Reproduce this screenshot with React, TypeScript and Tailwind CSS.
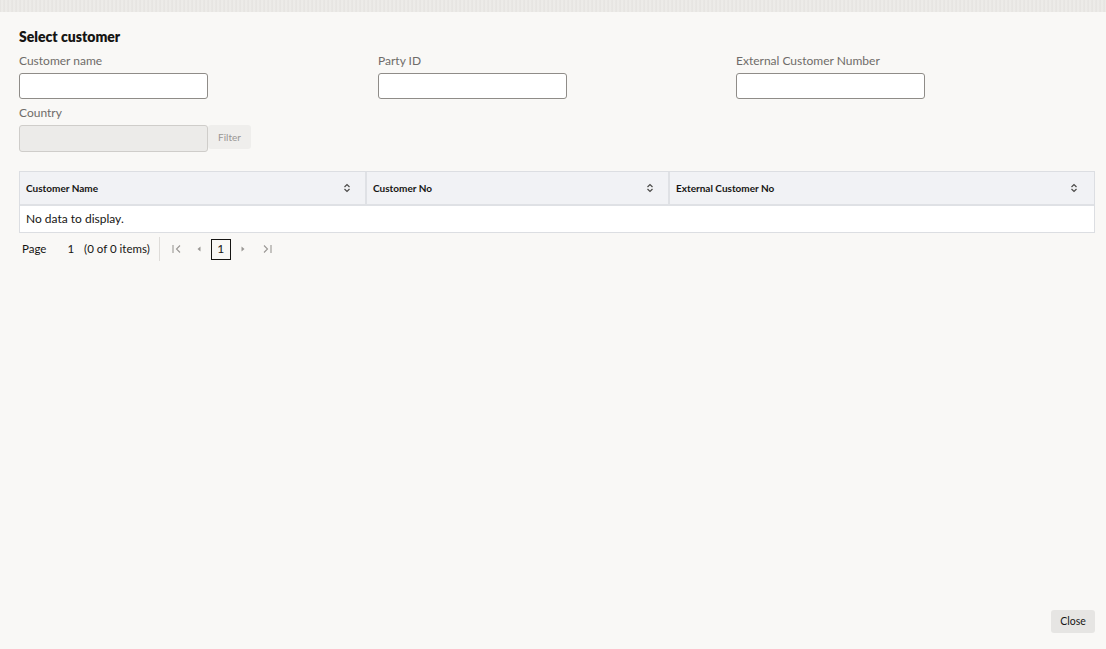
import React from 'react'

const SortIcon = () => (
  <svg width="8" height="10" viewBox="0 0 8 10" fill="none" stroke="#4b4a48" strokeWidth="1.2">
    <path d="M1.5 4 L4 1.5 L6.5 4" />
    <path d="M1.5 6 L4 8.5 L6.5 6" />
  </svg>
)

const Field = ({ label }: { label: string }) => (
  <div className="flex flex-col">
    <label className="text-[12px] leading-[16px] text-[#6f6c69] mb-[4px]">{label}</label>
    <input className="w-[189px] h-[26px] rounded-[3px] border border-[#8f8c88] bg-white outline-none" />
  </div>
)

export default function App() {
  return (
    <div
      className="w-[1106px] h-[649px] bg-[#f9f8f6] flex flex-col overflow-hidden"
      style={{ fontFamily: 'Lato, "Noto Sans", sans-serif' }}
    >
      <div className="h-[12px] bg-[#e9e8e5] bg-[repeating-linear-gradient(90deg,#e4e2df_0px,#efeeeb_2px,#e6e4e1_4px)]" />
      <div className="flex-1 flex flex-col pl-[19px] pr-[11px]">
        <h1 className="mt-[16px] text-[14px] leading-[18px] font-extrabold text-[#161513]">Select customer</h1>
        <div className="mt-[7px] grid grid-cols-[359px_358px_1fr]">
          <Field label="Customer name" />
          <Field label="Party ID" />
          <Field label="External Customer Number" />
        </div>
        <div className="mt-[6px] flex flex-col">
          <label className="text-[12px] leading-[16px] text-[#6f6c69] mb-[4px]">Country</label>
          <div className="flex items-start">
            <div className="w-[189px] h-[27px] rounded-[3px] border border-[#cfcdca] bg-[#ecebe9]" />
            <button className="h-[24px] w-[43px] rounded-[3px] bg-[#efeeec] text-[10px] text-[#9a9794]">Filter</button>
          </div>
        </div>

        <div className="mt-[19px] border border-[#dcdee2] bg-white">
          <div className="grid grid-cols-[347px_303px_1fr] h-[34px] bg-[#f1f2f5] border-b-2 border-[#dfe1e5]">
            <div className="flex items-center justify-between pl-[6px] pr-[14px] border-r-2 border-[#dfe1e5]">
              <span className="text-[10px] font-bold text-[#161513]">Customer Name</span>
              <SortIcon />
            </div>
            <div className="flex items-center justify-between pl-[6px] pr-[14px] border-r-2 border-[#dfe1e5]">
              <span className="text-[10px] font-bold text-[#161513]">Customer No</span>
              <SortIcon />
            </div>
            <div className="flex items-center justify-between pl-[6px] pr-[16px]">
              <span className="text-[10px] font-bold text-[#161513]">External Customer No</span>
              <SortIcon />
            </div>
          </div>
          <div className="h-[26px] flex items-center pl-[6px] text-[12px] text-[#161513]">No data to display.</div>
        </div>

        <div className="mt-[4px] h-[24px] flex items-center text-[11.5px] text-[#161513]">
          <span className="ml-[3px]">Page</span>
          <span className="ml-[21px]">1</span>
          <span className="ml-[10px]">(0 of 0 items)</span>
          <div className="ml-[9px] h-[24px] w-px bg-[#dedcd9]" />
          <div className="ml-[11px] flex items-center text-[#9a9794]">
            <svg width="12" height="12" viewBox="0 0 12 12" fill="none" stroke="#9a9794" strokeWidth="1.1">
              <path d="M2 2 V10" />
              <path d="M9 2.5 L5.5 6 L9 9.5" />
            </svg>
            <svg className="ml-[12px]" width="8" height="8" viewBox="0 0 8 8" fill="#9a9794">
              <path d="M5.5 1.5 L2.5 4 L5.5 6.5 Z" />
            </svg>
            <div className="ml-[8px] w-[20px] h-[21px] border border-[#161513] flex items-center justify-center text-[#161513] text-[12px]">1</div>
            <svg className="ml-[8px]" width="8" height="8" viewBox="0 0 8 8" fill="#9a9794">
              <path d="M2.5 1.5 L5.5 4 L2.5 6.5 Z" />
            </svg>
            <svg className="ml-[14px]" width="12" height="12" viewBox="0 0 12 12" fill="none" stroke="#9a9794" strokeWidth="1.1">
              <path d="M3 2.5 L6.5 6 L3 9.5" />
              <path d="M10 2 V10" />
            </svg>
          </div>
        </div>

        <div className="mt-auto mb-[16px] flex justify-end">
          <button className="w-[44px] h-[23px] rounded-[3px] bg-[#e6e5e3] text-[10.5px] text-[#161513]">Close</button>
        </div>
      </div>
    </div>
  )
}
